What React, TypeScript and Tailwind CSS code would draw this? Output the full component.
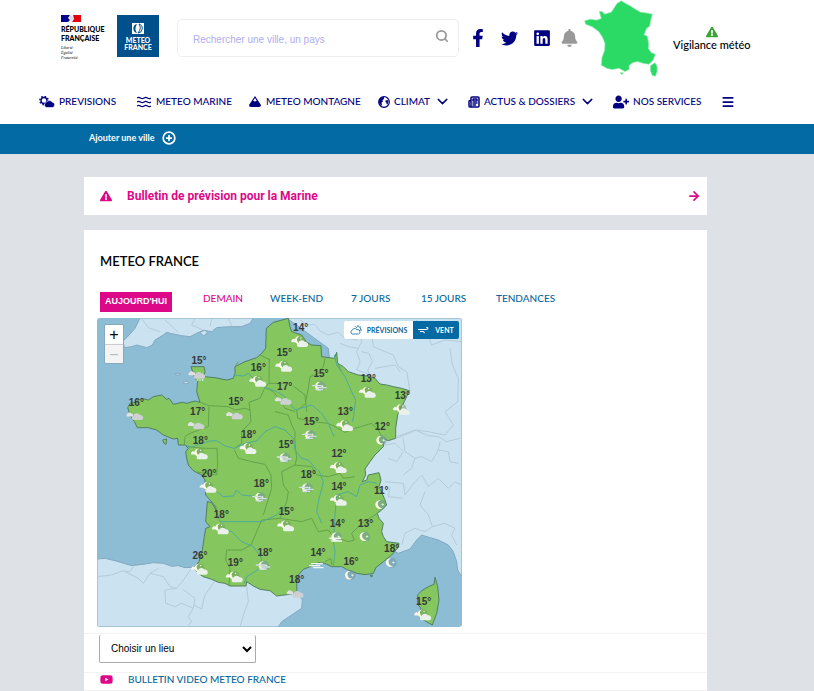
import { FaFacebookF, FaTwitter, FaLinkedin, FaBell, FaUserPlus, FaYoutube, FaExclamationTriangle } from "react-icons/fa";
import { ArrowRight, ChevronDown, CirclePlus, Menu, Newspaper, Search } from "lucide-react";

const franceOutline =
  "M580,10 L585,35 590,50 620,60 635,82 650,90 678,92 680,125 718,130 725,112 728,145 745,155 760,170 790,180 810,182 840,190 855,207 875,210 895,215 920,220 943,227 928,260 908,300 902,340 902,370 880,377 868,372 865,395 840,420 825,440 810,462 812,480 802,500 815,495 820,480 852,473 858,495 852,515 868,550 875,570 860,585 847,595 852,610 865,625 860,650 865,665 875,680 912,685 910,697 890,720 865,740 843,757 835,775 810,779 785,775 755,763 740,755 710,755 690,745 670,743 645,755 625,763 610,780 605,805 606,830 590,837 560,841 545,843 525,827 495,823 475,813 455,800 453,813 405,813 390,805 370,802 350,793 325,785 310,775 295,760 312,740 322,705 328,665 332,640 345,635 332,620 337,560 350,563 362,583 366,600 362,575 345,555 332,540 330,495 320,480 300,470 293,465 280,450 275,430 272,410 280,400 270,390 250,390 248,370 235,372 205,360 185,345 160,338 127,338 118,320 105,300 98,278 105,265 120,262 140,250 160,255 175,245 200,240 215,253 222,250 235,268 262,262 275,265 300,258 315,262 305,230 308,200 298,185 288,155 327,155 330,170 327,185 360,188 395,195 415,190 420,175 420,155 450,140 485,128 500,115 512,100 514,40 535,22 Z";

const foreignLand = [
  "M575,9 L1101,9 1101,785 1088,765 1085,740 1075,710 1060,690 1030,675 1005,668 980,660 965,675 945,702 910,715 880,700 750,560 700,100 Z",
  "M6,732 L30,730 60,737 110,752 150,747 175,743 205,745 230,754 250,752 270,758 297,757 400,790 600,825 622,855 620,880 590,900 560,920 550,936 6,936 Z",
  "M135,9 L120,40 95,68 84,78 88,98 110,95 125,90 155,98 172,90 180,75 205,60 215,52 230,56 260,62 285,65 305,55 325,46 350,50 365,38 400,35 440,35 465,25 475,9 Z",
  "M315,52 L328,46 338,52 326,63 Z",
  "M240,177 L252,174 258,178 246,181 Z",
  "M264,202 L278,198 281,204 270,207 Z",
];

const foreignBorders =
  "M138,9 L160,38 195,50 M210,15 L250,52 M300,10 L290,30 325,45 M350,12 L345,35 M400,10 L412,35 M615,15 L640,30 660,28 675,48 700,60 728,52 750,70 790,75 M760,15 L790,45 800,80 785,110 795,140 785,165 830,180 M735,85 L760,95 790,100 M800,110 L822,115 832,140 818,165 828,185 M850,15 L830,55 835,95 870,110 895,120 910,155 935,170 945,227 M840,160 L870,155 900,150 915,170 M965,15 L950,45 970,70 1000,65 1010,90 1050,75 1100,80 M1065,100 L1072,150 1090,190 1088,260 1050,290 1075,330 1050,360 1000,350 965,345 905,370 M905,365 L960,345 1000,362 1030,365 1055,380 1095,370 M870,390 L900,385 925,410 905,440 880,430 M925,370 L930,410 960,430 950,460 925,480 M1035,380 L1030,405 1060,410 1065,440 1090,445 M1030,405 L1010,440 980,425 960,430 M870,500 L925,505 930,540 960,500 980,480 1000,515 1030,490 1060,520 1080,500 1100,510 M885,515 L880,545 925,550 M990,530 L975,570 1000,600 1012,635 990,650 960,640 930,655 920,690 M1012,635 L1050,625 1080,640 1070,660 1085,690 M6,785 L50,780 80,768 105,770 115,755 M90,770 L130,790 145,805 165,775 190,760 M165,775 L205,785 225,815 245,820 262,800 290,760 M245,820 L210,825 212,865 240,875 260,865 295,880 300,850 262,822 M295,870 L320,882 330,840 358,800 M295,880 L280,905 290,920 275,936 M455,812 L460,860 445,900 435,936";

const regionBorders =
  "M420,155 L430,140 M523,130 L522,205 510,217 M495,120 L525,135 M522,205 L570,205 M315,262 L342,272 400,275 420,285 450,280 465,285 M342,275 L340,335 285,355 270,365 268,390 M465,285 L462,262 495,250 510,217 535,230 555,255 570,280 600,290 M465,285 L468,320 440,350 440,385 418,400 M278,395 L330,400 366,400 368,445 365,480 300,470 M418,405 L430,430 470,440 510,448 528,480 530,520 505,600 M605,285 L608,310 650,320 700,325 720,335 750,352 780,340 830,325 850,345 865,375 M690,130 L685,155 670,175 645,185 640,220 632,260 635,290 M595,213 L630,240 632,265 608,285 M540,290 L580,300 590,330 600,350 600,385 605,430 600,450 560,470 565,510 580,530 575,560 555,610 500,615 468,690 M600,450 L650,455 665,480 700,485 735,475 745,490 780,485 M555,610 L620,620 650,610 670,650 700,645 715,665 760,680 778,675 770,655 800,625 840,600 852,590 M468,690 L440,705 395,705 392,735 405,760 402,812 M710,750 L708,730 690,740 M728,145 L740,170";

const rivers =
  "M270,390 L290,397 320,385 345,378 365,377 390,393 418,400 450,385 485,378 510,350 540,335 570,345 595,370 600,405 620,430 640,435 665,465 M418,180 L445,183 460,175 475,190 510,217 545,230 570,245 600,285 650,270 680,295 700,325 717,365 M718,120 L725,150 750,185 770,230 782,255 773,320 M671,465 L685,500 670,560 665,590 680,625 M725,540 L720,600 715,680 720,710 715,755 M725,540 L760,530 785,545 795,510 820,500 845,505 M363,585 L375,620 500,620 545,600 570,575 M365,530 L385,545 415,543 425,525 440,540 490,545 M375,640 L410,650 440,680 475,695 500,730 495,760 455,785 448,805";

const corsica =
  "M1020,787 L1028,815 1032,855 1025,895 1012,930 985,915 970,895 978,880 968,868 968,840 980,827 1000,815 1017,808 Z";

type IconKind = "moonCloud" | "clouds" | "moonMist" | "moon" | "mist" | "rain" | "moonFog";

type Reading = { t: number; x: number; y: number; kind: IconKind; ix: number; iy: number };

const readings: Reading[] = [
  { t: 14, x: 617, y: 47, kind: "moonCloud", ix: 612, iy: 80 },
  { t: 15, x: 568, y: 122, kind: "moonCloud", ix: 564, iy: 154 },
  { t: 15, x: 312, y: 148, kind: "rain", ix: 305, iy: 177 },
  { t: 16, x: 490, y: 167, kind: "moonCloud", ix: 486, iy: 199 },
  { t: 15, x: 678, y: 186, kind: "moonMist", ix: 673, iy: 214 },
  { t: 13, x: 820, y: 200, kind: "moonCloud", ix: 815, iy: 232 },
  { t: 17, x: 569, y: 224, kind: "clouds", ix: 564, iy: 255 },
  { t: 13, x: 922, y: 253, kind: "moonCloud", ix: 917, iy: 284 },
  { t: 15, x: 423, y: 269, kind: "clouds", ix: 418, iy: 299 },
  { t: 16, x: 124, y: 272, kind: "clouds", ix: 119, iy: 301 },
  { t: 17, x: 308, y: 299, kind: "clouds", ix: 303, iy: 329 },
  { t: 13, x: 751, y: 300, kind: "moonCloud", ix: 747, iy: 332 },
  { t: 15, x: 649, y: 331, kind: "moonMist", ix: 643, iy: 360 },
  { t: 12, x: 862, y: 346, kind: "moon", ix: 857, iy: 376 },
  { t: 18, x: 461, y: 369, kind: "moonCloud", ix: 457, iy: 401 },
  { t: 18, x: 316, y: 386, kind: "moonCloud", ix: 311, iy: 417 },
  { t: 15, x: 573, y: 399, kind: "moonMist", ix: 567, iy: 428 },
  { t: 12, x: 732, y: 427, kind: "moonCloud", ix: 728, iy: 458 },
  { t: 20, x: 342, y: 486, kind: "moonCloud", ix: 337, iy: 517 },
  { t: 18, x: 640, y: 489, kind: "moonMist", ix: 634, iy: 519 },
  { t: 18, x: 499, y: 517, kind: "moonMist", ix: 493, iy: 547 },
  { t: 14, x: 732, y: 524, kind: "moonCloud", ix: 728, iy: 556 },
  { t: 11, x: 859, y: 537, kind: "moon", ix: 854, iy: 569 },
  { t: 15, x: 574, y: 601, kind: "moonCloud", ix: 570, iy: 633 },
  { t: 18, x: 379, y: 608, kind: "moonCloud", ix: 374, iy: 642 },
  { t: 14, x: 727, y: 635, kind: "moonFog", ix: 722, iy: 666 },
  { t: 13, x: 812, y: 635, kind: "moon", ix: 807, iy: 665 },
  { t: 18, x: 890, y: 712, kind: "moon", ix: 886, iy: 743 },
  { t: 14, x: 669, y: 722, kind: "mist", ix: 664, iy: 751 },
  { t: 18, x: 510, y: 722, kind: "moonMist", ix: 504, iy: 752 },
  { t: 26, x: 315, y: 731, kind: "moonCloud", ix: 311, iy: 763 },
  { t: 19, x: 421, y: 754, kind: "moonCloud", ix: 416, iy: 786 },
  { t: 16, x: 768, y: 750, kind: "moon", ix: 763, iy: 781 },
  { t: 18, x: 605, y: 803, kind: "clouds", ix: 600, iy: 834 },
  { t: 15, x: 986, y: 869, kind: "moonCloud", ix: 981, iy: 900 },
];

const bigCloud = "M-13,13 a9,8 0 0 1 1,-13 a11,10 0 0 1 20,-2 a8,8 0 0 1 5,15 Z";
const crescent = "M3,-13 A13,13 0 1 0 9,9 A11,11 0 0 1 3,-13 Z";

function WeatherIcon({ kind }: { kind: IconKind }) {
  if (kind === "clouds" || kind === "rain") {
    return (
      <g>
        <path d={bigCloud} transform="translate(-15 -4) scale(.6)" fill="#dfe1e4" />
        <path d={bigCloud} transform="translate(8 1)" fill="#ced0d4" />
        {kind === "rain" && <path d="M0,18 h22" stroke="#d9f1fa" strokeWidth="4" strokeDasharray="4 4" />}
      </g>
    );
  }
  if (kind === "mist") {
    return <path d="M-14,-5 H18 M-20,1 H10 M-8,7 H20" stroke="#f1f5f6" strokeWidth="4" strokeLinecap="round" />;
  }
  if (kind === "moonCloud") {
    return (
      <g>
        <circle cx="4" cy="-4" r="13" fill="#6f9d62" opacity=".5" />
        <path d={bigCloud} transform="translate(-15 -5) scale(.5)" fill="#f1f5f4" />
        <path d={crescent} transform="translate(-1 -4) scale(.9)" fill="#fffbe2" />
        <circle cx="6" cy="-11" r="2" fill="#fff" />
        <path d={bigCloud} transform="translate(10 3)" fill="#e9f1ea" />
      </g>
    );
  }
  return (
    <g>
      <circle cx="4" cy="0" r="15" fill="#6f95a1" opacity=".5" />
      <path d={crescent} fill="#fffbe2" />
      <path d="M9,-5 l2,3 3,1 -3,2 -2,3 -2,-3 -3,-2 3,-1 Z" fill="#e6edcf" />
      {kind === "moonMist" && (
        <path d="M-20,-2 H5 M-6,4 H20 M-10,10 H10" stroke="#d5dfe5" strokeWidth="4" strokeLinecap="round" />
      )}
      {kind === "moonFog" && (
        <path d="M-17,4 H15 M-12,12 H17" stroke="#f3f7f3" strokeWidth="5" strokeLinecap="round" />
      )}
    </g>
  );
}

function WeatherMap() {
  return (
    <svg viewBox="6 9 1095 927" className="block w-full" role="img" aria-label="Carte des prévisions">
      <rect x="6" y="9" width="1095" height="927" fill="#8dbcd5" />
      <g fill="#cbe2f0" stroke="#83a9bf" strokeWidth="3" strokeLinejoin="round">
        {foreignLand.map((d) => (
          <path key={d} d={d} />
        ))}
      </g>
      <path d={foreignBorders} fill="none" stroke="#b5cbda" strokeWidth="3" strokeLinejoin="round" />
      <g fill="#85c65e" stroke="#527f62" strokeWidth="3" strokeLinejoin="round">
        <path d={franceOutline} />
        <path d={corsica} />
        <path d="M203,375 L215,372 213,388 207,385 Z" />
        <path d="M825,782 L832,780 831,786 Z" />
      </g>
      <path d={regionBorders} fill="none" stroke="#64a34d" strokeWidth="3" strokeLinejoin="round" />
      <path d={rivers} fill="none" stroke="#4faa9c" strokeWidth="3" strokeLinejoin="round" />
      {readings.map((r) => (
        <g key={`${r.ix}-${r.iy}`}>
          <g transform={`translate(${r.ix} ${r.iy})`}>
            <WeatherIcon kind={r.kind} />
          </g>
          <text
            x={r.x}
            y={r.y}
            textAnchor="middle"
            className="fill-[#343a37] font-['Liberation_Sans',sans-serif] text-[30px] font-bold"
          >
            {r.t}°
          </text>
        </g>
      ))}
    </svg>
  );
}

function RepubliqueLogo() {
  return (
    <a href="#" className="block w-12 text-black" aria-label="République Française">
      <svg viewBox="0 0 20 7" className="h-[7px] w-5" aria-hidden="true">
        <path d="M0,0 H9 L7,3 9,5 7,7 H0 Z" fill="#000091" />
        <path d="M12,0 H20 V7 H11 L13,4 Z" fill="#e1000f" />
        <path d="M8,1 l3,0 2,3 -2,1 -1,2" fill="#d8dceb" />
      </svg>
      <span className="mt-[3px] flex flex-col font-[Lato,sans-serif] text-[7px] leading-[9px] font-black">
        <span>RÉPUBLIQUE</span>
        <span>FRANÇAISE</span>
      </span>
      <span className="mt-[2px] flex flex-col font-['Liberation_Serif',serif] text-[4px] leading-[5px] italic">
        <span>Liberté</span>
        <span>Égalité</span>
        <span>Fraternité</span>
      </span>
    </a>
  );
}

function MeteoLogo() {
  return (
    <a href="#" className="flex size-[42px] flex-col items-center bg-[#00508c] pt-2 text-white">
      <svg viewBox="0 0 12 11" className="h-[11px] w-3" aria-hidden="true">
        <rect width="12" height="11" fill="#fff" />
        <path d="M5,1 A4.600,4.600 0 0 0 5,10 A8,8 0 0 1 5,1 Z" fill="#00508c" />
        <path d="M7,1 A4.600,4.600 0 0 1 6,10 M7,1 Q10,5 6,10" fill="none" stroke="#00508c" />
      </svg>
      <span className="mt-[3px] text-center font-[Lato,sans-serif] text-[7px] leading-[7px] font-black">
        METEO
        <br />
        FRANCE
      </span>
    </a>
  );
}

function FranceShape() {
  return (
    <svg viewBox="0 0 222 230" className="h-[77px] w-[74px]" role="img" aria-label="Carte de vigilance">
      <path
        d="M99,10 L112,2 125,10 140,18 155,28 170,36 184,38 205,42 200,60 197,78 188,84 180,104 190,108 194,130 193,145 202,158 214,162 207,180 195,192 180,190 160,184 145,188 135,196 135,208 123,214 105,204 85,208 70,205 52,195 54,172 62,150 63,130 56,112 45,95 25,80 5,72 2,62 20,57 38,60 52,55 46,34 54,34 62,42 82,36 Z M200,196 L213,188 219,198 219,215 214,228 205,226 199,210 Z M108,218 L118,218 114,223 Z"
        fill="#2bd965"
        stroke="#8be9aa"
        strokeWidth="2"
        strokeLinejoin="round"
      />
    </svg>
  );
}

function SunCloudIcon() {
  return (
    <svg viewBox="0 0 16 12" className="h-3 w-4" aria-hidden="true">
      <circle cx="5" cy="4.500" r="3" fill="none" stroke="currentColor" strokeWidth="1.400" />
      <circle cx="5" cy="4.500" r="4.200" fill="none" stroke="currentColor" strokeWidth="1.400" strokeDasharray="1.500 1.800" />
      <path
        d="M7.500,11.500 a2.600,2.600 0 0 1 -.4,-5 a3.600,3.600 0 0 1 6,-.5 a2.800,2.800 0 0 1 .5,5.500 Z"
        fill="currentColor"
        stroke="#fff"
        strokeWidth=".6"
      />
    </svg>
  );
}

function WavesIcon() {
  return (
    <svg viewBox="0 0 14 12" className="h-3 w-[14px]" fill="none" stroke="currentColor" strokeWidth="1.300" aria-hidden="true">
      <path d="M0,2 q1.750,-1.300 3.500,0 t3.500,0 t3.500,0 t3.500,0 M0,6 q1.750,-1.300 3.500,0 t3.500,0 t3.500,0 t3.500,0 M0,10 q1.750,-1.300 3.500,0 t3.500,0 t3.500,0 t3.500,0" />
    </svg>
  );
}

function MountainIcon() {
  return (
    <svg viewBox="0 0 12 11" className="h-[11px] w-3" aria-hidden="true">
      <path d="M6,0 L12,9 Q12,11 10,11 H2 Q0,11 0,9 Z" fill="currentColor" />
      <path d="M6,2 L8,5.200 7,4.800 6,5.800 4.800,4.800 4,5 Z" fill="#fff" />
    </svg>
  );
}

function GlobeIcon() {
  return (
    <svg viewBox="0 0 12 12" className="size-3" aria-hidden="true">
      <circle cx="6" cy="6" r="5.300" fill="none" stroke="currentColor" strokeWidth="1.200" />
      <path d="M1,4 L3,1.500 6,1 6,3 4.500,4 5,5.500 3.500,6.500 4,9 3,9.500 1,7 Z M7.500,4.500 L9.500,4 10.500,5.500 9.500,8.500 8.500,8 8.500,6.500 7.500,6 Z" fill="currentColor" />
    </svg>
  );
}

const tabs = ["WEEK-END", "7 JOURS", "15 JOURS", "TENDANCES"];
const tabWidths = ["w-[81px]", "w-[70px]", "w-[75px]", ""];

export default function App() {
  return (
    <div className="min-h-screen bg-[#dee1e6] font-[Lato,sans-serif] text-black">
      <header className="bg-white text-[#000080]">
        <div className="flex h-[79px] items-start pl-[61px]">
          <div className="flex w-[116px] gap-2 pt-[15px]">
            <RepubliqueLogo />
            <MeteoLogo />
          </div>
          <form className="mt-[19px] flex h-[38px] w-[282px] items-center rounded-[5px] border border-[#eeeeee] pr-[9px] pl-[15px]">
            <input
              type="search"
              aria-label="Rechercher une ville, un pays"
              placeholder="Rechercher une ville, un pays"
              className="min-w-0 flex-1 pt-[2px] font-['Liberation_Sans',sans-serif] text-[10px] outline-none placeholder:text-[#b0adf0]"
            />
            <button type="button" aria-label="Rechercher" className="mb-1 text-[#999999]">
              <Search className="size-[14px]" strokeWidth={3} />
            </button>
          </form>
          <nav aria-label="Réseaux sociaux" className="ml-[11px] flex h-[76px] items-center gap-[15px]">
            <a href="#" aria-label="Facebook"><FaFacebookF className="h-[18px] w-4" /></a>
            <a href="#" aria-label="Twitter"><FaTwitter className="size-[17px]" /></a>
            <a href="#" aria-label="LinkedIn"><FaLinkedin className="size-[18px]" /></a>
          </nav>
          <button type="button" aria-label="Notifications" className="mt-[29px] ml-[10px] text-[#999999]">
            <FaBell className="h-[18px] w-[17px]" />
          </button>
          <div className="ml-[6px]"><FranceShape /></div>
          <a href="#" className="mt-[26px] ml-[15px] flex flex-col items-center text-[11px] leading-[13px] font-medium text-black">
            <FaExclamationTriangle className="size-3 text-[#3aa535]" />
            Vigilance météo
          </a>
        </div>
        <nav aria-label="Menu principal" className="flex h-[45px] items-center pl-[39px] text-[10px] font-medium">
          <a href="#" className="flex w-[98px] items-center gap-1"><SunCloudIcon />PREVISIONS</a>
          <a href="#" className="flex w-[112px] items-center gap-[5px]"><WavesIcon />METEO MARINE</a>
          <a href="#" className="flex w-[129px] items-center gap-[5px]"><MountainIcon />METEO MONTAGNE</a>
          <button type="button" className="flex w-[90px] items-center gap-1"><GlobeIcon />CLIMAT<ChevronDown className="size-[17px]" /></button>
          <button type="button" className="flex w-[145px] items-center gap-1"><Newspaper className="size-3" strokeWidth={3} />ACTUS &amp; DOSSIERS<ChevronDown className="size-[17px]" /></button>
          <a href="#" className="flex w-[108px] items-center gap-1"><FaUserPlus className="size-4" />NOS SERVICES</a>
          <button type="button" aria-label="Menu"><Menu className="size-[14px]" strokeWidth={3} /></button>
        </nav>
      </header>
      <div className="flex h-[30px] items-center bg-[#036aa3] pb-[2px] pl-[89px] text-white">
        <button type="button" className="flex items-center gap-[7px] text-[9px] font-bold">
          Ajouter une ville
          <CirclePlus className="size-[14px]" strokeWidth={3} />
        </button>
      </div>
      <main className="pt-[23px] pr-[107px] pl-[84px]">
        <a href="#" className="flex h-[38px] items-center bg-white pr-[6px] pl-4 font-[Roboto,sans-serif] text-xs font-bold text-[#dd0887]">
          <FaExclamationTriangle className="size-3" />
          <span className="ml-[15px] flex-1">Bulletin de prévision pour la Marine</span>
          <ArrowRight className="size-[14px]" strokeWidth={3} />
        </a>
        <section className="mt-[15px] border-b border-[#eeeeee] bg-white pt-[23px]">
          <h1 className="pl-4 text-[13px] leading-4 font-semibold">METEO FRANCE</h1>
          <div className="mt-[22px] flex items-start pl-4 text-[10px] font-medium text-[#0a679c]">
            <button type="button" className="mt-[1px] h-5 w-[72px] bg-[#dd0887] font-['Liberation_Sans',sans-serif] text-[9px] font-bold text-white">
              AUJOURD'HUI
            </button>
            <button type="button" className="ml-[31px] w-[67px] text-left text-[#dd0887]">DEMAIN</button>
            {tabs.map((tab, i) => (
              <button type="button" key={tab} className={`text-left ${tabWidths[i]}`}>{tab}</button>
            ))}
          </div>
          <div className="relative mt-[6px] ml-[13px] w-[365px] max-w-full overflow-hidden rounded-[3px]">
            <WeatherMap />
            <div className="absolute top-[6px] left-[7px] flex w-5 flex-col overflow-hidden rounded-[2px] border border-[#86a9bb] font-['Liberation_Sans',sans-serif] text-base leading-[19px]">
              <button type="button" aria-label="Zoom avant" className="h-[19px] bg-white">+</button>
              <button type="button" aria-label="Zoom arrière" disabled className="h-[19px] border-t border-[#cccccc] bg-[#f4f4f4] text-[#bbbbbb]">−</button>
            </div>
            <div className="absolute top-[3px] right-[3px] flex h-[18px] overflow-hidden rounded-[2px] text-[7px] font-bold">
              <button type="button" className="flex w-[69px] items-center justify-center gap-[5px] bg-white text-[#0a679c]">
                <svg viewBox="0 0 12 10" className="h-[10px] w-3" fill="none" stroke="currentColor" strokeWidth=".8" aria-hidden="true">
                  <path d="M2,9 a2,2 0 0 1 0,-3.500 a2.800,2.800 0 0 1 5,-.8 a2.200,2.200 0 0 1 1.500,4.300 Z M6,3 a2.400,2.400 0 1 1 3.500,3 M5,1 l.6,.8 M8,0 v1 M11,1.500 l-.8,.6 M12,5 h-1" />
                </svg>
                PRÉVISIONS
              </button>
              <button type="button" className="flex w-[46px] items-center justify-center gap-[6px] bg-[#036aa3] text-white">
                <svg viewBox="0 0 11 8" className="h-2 w-[11px]" fill="none" stroke="currentColor" aria-hidden="true">
                  <path d="M0,3.500 H8 Q10.500,3.500 10,1.800 Q9,.8 8.200,1.800 M2,5.500 H5 Q6.800,5.500 6.200,7.200" />
                </svg>
                VENT
              </button>
            </div>
          </div>
          <div className="mt-[6px] border-t border-[#f3f3f3] pt-[1px]">
            <select aria-label="Choisir un lieu" className="ml-[15px] block h-7 w-[157px] rounded-[2px] border border-t-0 border-[#aaaaaa] bg-white pl-[7px] font-['Liberation_Sans',sans-serif] text-[10px]">
              <option>Choisir un lieu</option>
            </select>
          </div>
          <a href="#" className="mt-[9px] flex h-[18px] items-center gap-[15px] border-t border-[#f3f3f3] pb-[5px] pl-4 text-[10px] font-medium text-[#0a679c]">
            <FaYoutube className="size-[13px] text-[#dd0887]" />
            BULLETIN VIDEO METEO FRANCE
          </a>
        </section>
      </main>
    </div>
  );
}
